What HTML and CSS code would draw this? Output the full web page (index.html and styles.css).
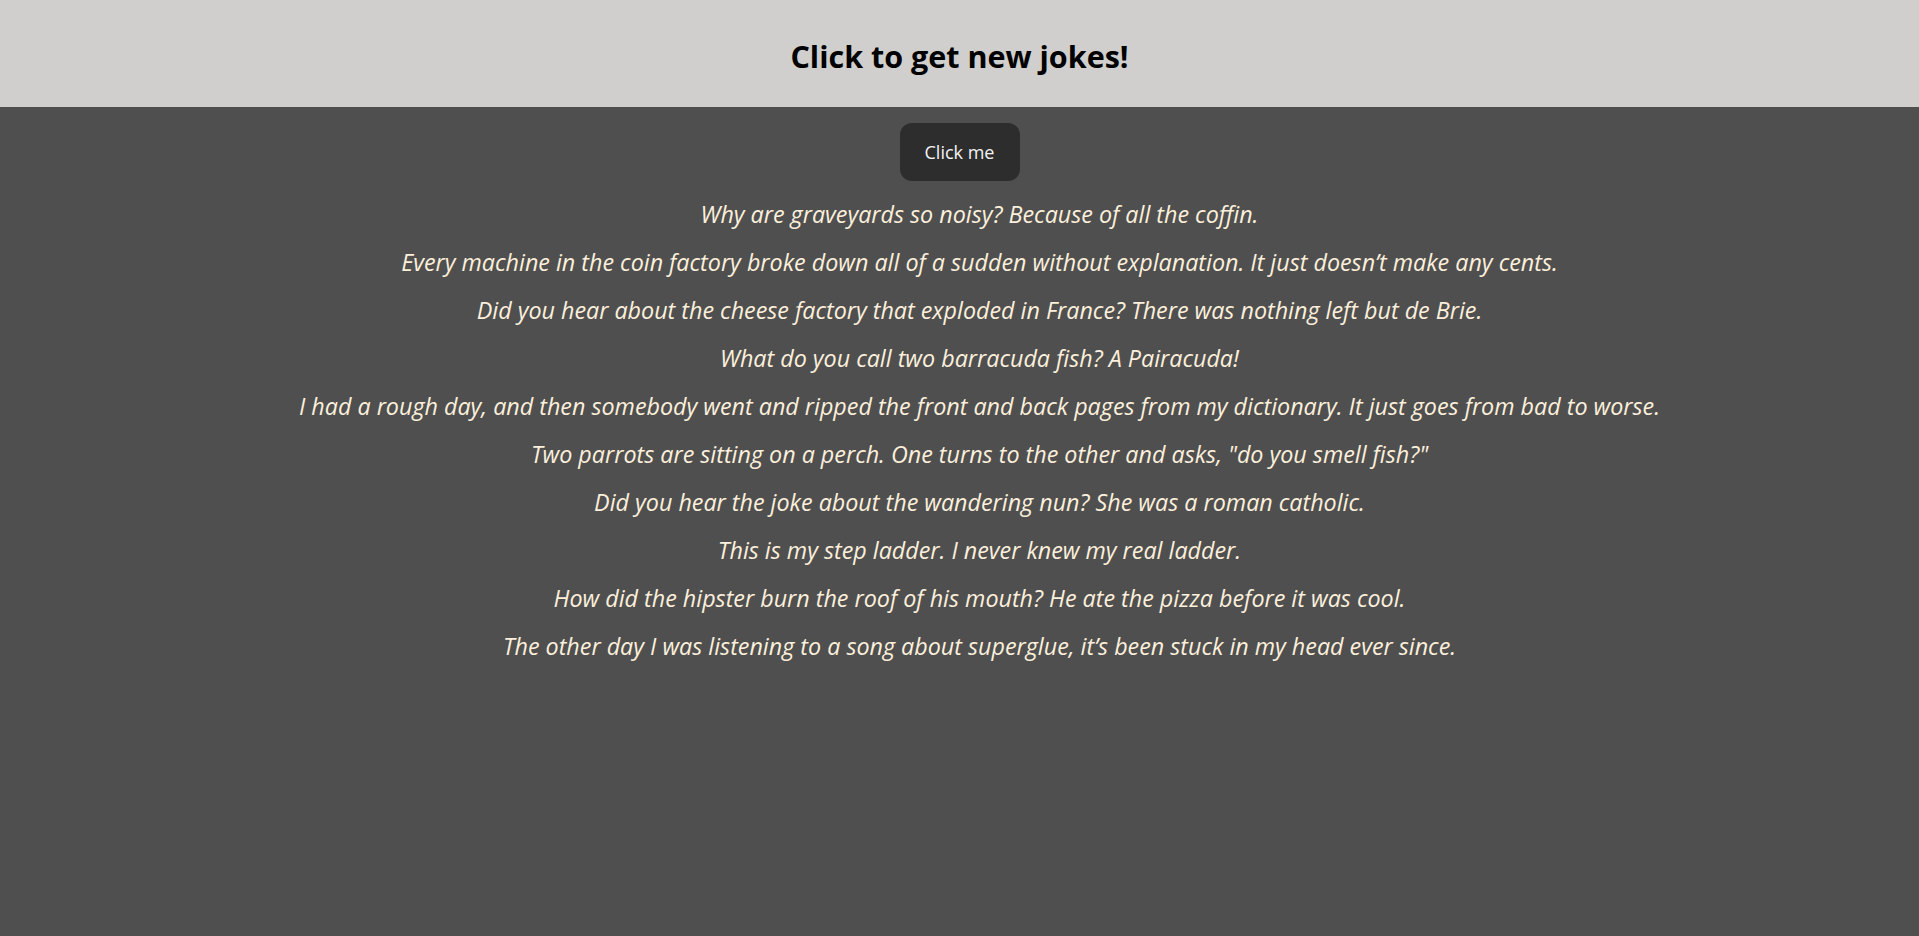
FILE: index.html
```html
<!DOCTYPE html>
<html>
<head>
<meta charset="utf-8">
<link rel="stylesheet" href="styles.css">
</head>
<body>
<header class="header">
  <h1 class="title">Click to get new jokes!</h1>
</header>
<main class="main">
  <button class="btn">Click me</button>
  <ul class="jokes">
    <li class="joke">Why are graveyards so noisy? Because of all the coffin.</li>
    <li class="joke">Every machine in the coin factory broke down all of a sudden without explanation. It just doesn’t make any cents.</li>
    <li class="joke">Did you hear about the cheese factory that exploded in France? There was nothing left but de Brie.</li>
    <li class="joke">What do you call two barracuda fish? A Pairacuda!</li>
    <li class="joke">I had a rough day, and then somebody went and ripped the front and back pages from my dictionary. It just goes from bad to worse.</li>
    <li class="joke">Two parrots are sitting on a perch. One turns to the other and asks, "do you smell fish?"</li>
    <li class="joke">Did you hear the joke about the wandering nun? She was a roman catholic.</li>
    <li class="joke">This is my step ladder. I never knew my real ladder.</li>
    <li class="joke">How did the hipster burn the roof of his mouth? He ate the pizza before it was cool.</li>
    <li class="joke">The other day I was listening to a song about superglue, it’s been stuck in my head ever since.</li>
  </ul>
</main>
</body>
</html>
```
FILE: styles.css
```css
html, body {
  margin: 0;
  padding: 0;
  height: 100%;
}
body {
  background: #4f4f4f;
  font-family: "Open Sans", "Noto Sans", sans-serif;
}
.header {
  background: #d0cfcd;
  height: 107px;
  display: flex;
  align-items: center;
  justify-content: center;
}
.title {
  margin: 4px 0 0;
  font-size: 30.5px;
  font-weight: 700;
  color: #000;
}
.main {
  display: flex;
  flex-direction: column;
  align-items: center;
  padding-top: 16px;
}
.btn {
  width: 120px;
  height: 58px;
  border: none;
  border-radius: 12px;
  background: #2d2d2d;
  color: #f3f3f3;
  font-family: "Open Sans", sans-serif;
  font-size: 18px;
}
.jokes {
  align-self: stretch;
  list-style: none;
  margin: 17px 0 0;
  padding: 0 0 0 40px;
  display: flex;
  flex-direction: column;
  align-items: center;
  gap: 16px;
}
.joke {
  margin: 0;
  font-style: italic;
  font-size: 23.3px;
  line-height: 32px;
  color: #fcefdc;
  text-align: center;
}
```
